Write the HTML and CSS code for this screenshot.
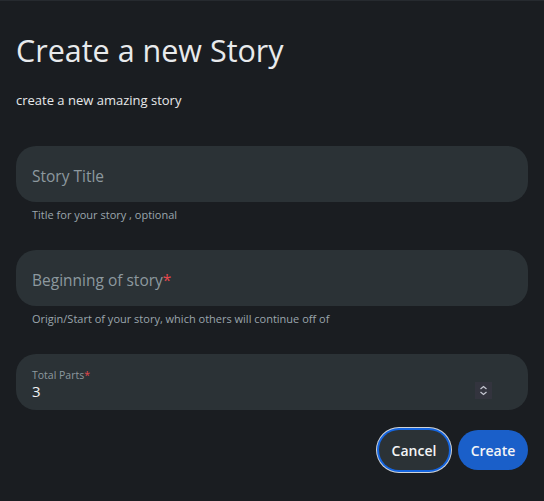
FILE: index.html
```html
<!DOCTYPE html>
<html>
<head>
<meta charset="utf-8">
<link rel="stylesheet" href="styles.css">
</head>
<body>
<div class="dialog">
  <h1 class="title">Create a new Story</h1>
  <p class="subtitle">create a new amazing story</p>
  <div class="field-group">
    <div class="field"><span class="placeholder">Story Title</span></div>
    <div class="helper">Title for your story , optional</div>
  </div>
  <div class="field-group">
    <div class="field"><span class="placeholder">Beginning of story<span class="req">*</span></span></div>
    <div class="helper">Origin/Start of your story, which others will continue off of</div>
  </div>
  <div class="field-group">
    <div class="field number">
      <div class="num-content">
        <span class="label">Total Parts<span class="req">*</span></span>
        <span class="value">3</span>
      </div>
      <div class="spin">
        <svg width="17" height="17" viewBox="0 0 17 17"><path d="M5.5 7 L8.5 4.5 L11.5 7" fill="none" stroke="#c4c6d0" stroke-width="1.3"/><path d="M5.5 10 L8.5 12.5 L11.5 10" fill="none" stroke="#c4c6d0" stroke-width="1.3"/></svg>
      </div>
    </div>
  </div>
  <div class="actions">
    <button class="btn cancel">Cancel</button>
    <button class="btn create">Create</button>
  </div>
</div>
</body>
</html>
```
FILE: styles.css
```css
html, body {
  margin: 0;
  padding: 0;
  background: #1a1d21;
}
body {
  width: 544px;
  height: 501px;
  overflow: hidden;
  font-family: "Open Sans", "Noto Sans", sans-serif;
  color: #e6e8ea;
}
.dialog {
  box-sizing: border-box;
  height: 501px;
  border-top: 1px solid #262a2f;
  padding: 0 16px;
}
.title {
  margin: 28px 0 0;
  font-size: 30.5px;
  font-weight: 400;
  line-height: 42px;
  color: #e8eaec;
}
.subtitle {
  margin: 20px 0 0;
  font-size: 13px;
  line-height: 18px;
  color: #e6e8ea;
}
.field-group {
  margin-top: 37px;
}
.field-group + .field-group {
  margin-top: 27px;
}
.field {
  box-sizing: border-box;
  height: 56px;
  border-radius: 20px;
  background: #2b3236;
  display: flex;
  align-items: center;
  padding: 4px 16px 0;
}
.placeholder {
  font-size: 15.5px;
  color: #8d999f;
}
.req {
  color: #e5484d;
}
.helper {
  padding: 0 16px;
  margin-top: 5px;
  font-size: 11px;
  line-height: 16px;
  color: #9aa6ad;
}
.number {
  justify-content: space-between;
  align-items: flex-start;
  padding-top: 14px;
}
.num-content {
  display: flex;
  flex-direction: column;
}
.label {
  font-size: 10.5px;
  line-height: 14px;
  color: #8d999f;
}
.value {
  font-size: 15px;
  line-height: 18px;
  color: #f2f3f4;
}
.spin {
  width: 17px;
  height: 17px;
  background: #33343e;
  margin-right: 20px;
  margin-top: 14px;
  display: flex;
}
.actions {
  display: flex;
  justify-content: flex-end;
  align-items: center;
  gap: 9px;
  margin-top: 20px;
}
.btn {
  font-family: "Open Sans", "Noto Sans", sans-serif;
  font-size: 14px;
  font-weight: 600;
  color: #f4f5f6;
  border: none;
  border-radius: 20px;
  height: 40px;
  padding: 0;
}
.cancel {
  background: #2b3236;
  width: 70px;
  box-shadow: 0 0 0 2px #1565e0, 0 0 0 3px #d0d4d8;
}
.create {
  background: #1a5fc9;
  width: 70px;
}
```
